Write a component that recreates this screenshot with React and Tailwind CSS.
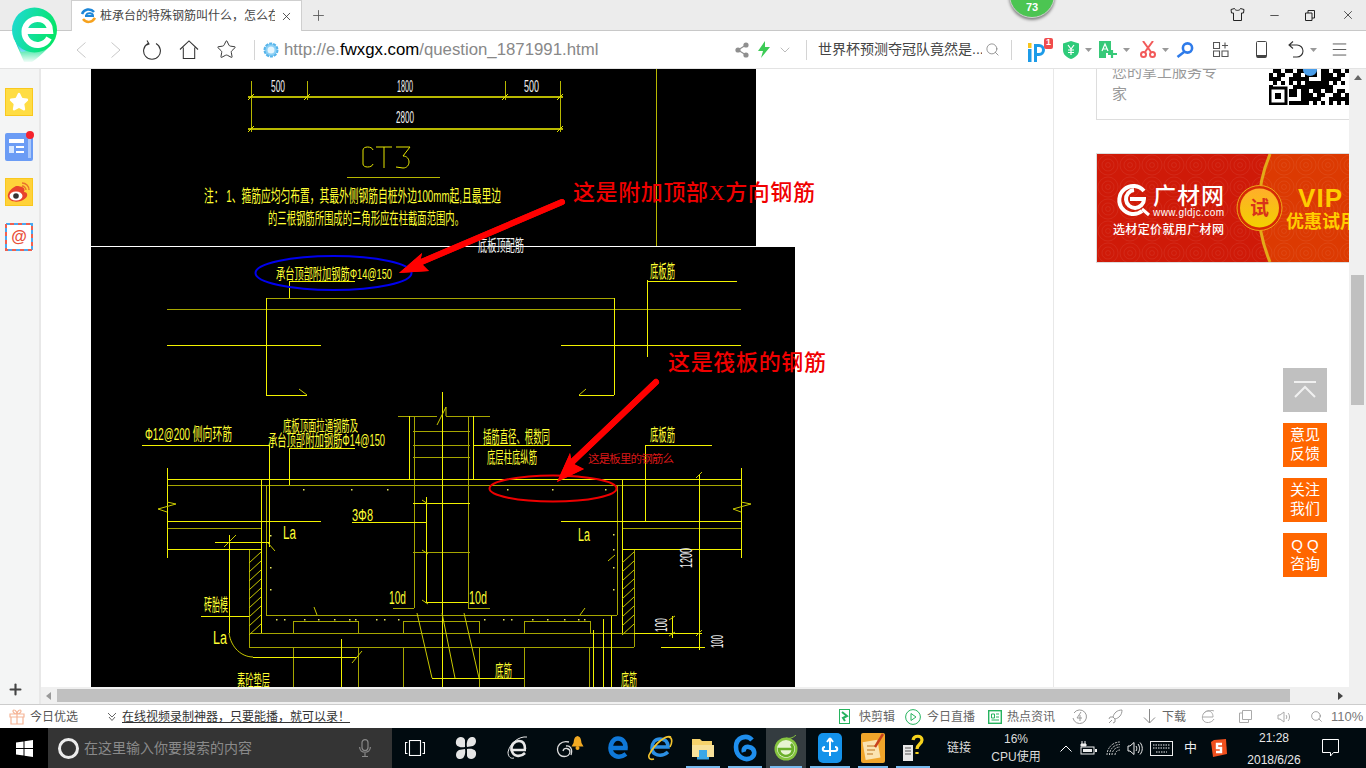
import React from "react";
import { Star, ChevronDown, Search, Plus, X, Minus, Menu } from "lucide-react";

// CAD drawing lines, page coordinates [x1, y1, x2, y2]
const topLines = [
  [251, 81, 251, 132], [307, 81, 307, 100], [505, 81, 505, 100],
  [560, 81, 560, 132], [347, 177, 440, 177], [656, 69, 656, 246],
];

const brightLines = [
  [289, 281, 355, 281], [289, 281, 289, 298], [647, 281, 737, 281], [647, 280, 647, 357],
  [167, 345, 321, 345], [561, 345, 741, 345], [266, 298, 266, 395], [614, 298, 614, 395],
  [266, 395, 307, 395], [579, 395, 614, 395], [167, 479, 741, 479], [167, 468, 167, 558], [741, 468, 741, 558],
  [167, 521, 321, 521], [561, 521, 741, 521], [167, 549, 262, 549], [622, 549, 741, 549],
  [261, 479, 261, 633], [622, 479, 622, 633], [269, 445, 269, 547], [142, 445, 269, 445],
  [289, 448, 355, 448], [289, 448, 289, 485], [409, 416, 409, 479], [473, 416, 473, 479],
  [442, 392, 442, 687], [413, 503, 470, 503], [425, 602, 468, 602], [426, 497, 426, 603],
  [352, 522, 426, 522], [215, 542, 269, 542], [201, 616, 249, 616], [229, 535, 229, 633],
  [253, 657, 357, 657], [432, 678, 524, 678], [473, 445, 571, 445], [645, 445, 712, 445],
  [645, 445, 645, 521], [699, 475, 699, 650], [634, 633, 702, 633], [661, 647, 705, 647], [672, 616, 672, 638],
  [593, 630, 593, 687], [603, 619, 603, 687], [611, 616, 611, 687], [341, 639, 341, 687],
];

const dullLines = [
  [266, 298, 614, 298], [167, 309, 741, 309], [167, 485, 741, 485], [167, 528, 262, 528], [622, 528, 741, 528],
  [266, 485, 266, 615], [266, 615, 617, 615], [617, 485, 617, 615], [249, 550, 249, 647], [249, 633, 634, 633],
  [249, 647, 634, 647], [634, 550, 634, 647], [414, 416, 414, 608], [468, 416, 468, 608],
  [398, 416, 437, 416], [446, 416, 490, 416], [413, 431, 470, 431], [413, 445, 470, 445], [413, 457, 470, 457],
  [413, 552, 470, 552], [393, 608, 414, 608], [468, 608, 490, 608],
  [293, 621, 358, 621], [293, 621, 293, 633], [358, 621, 358, 633], [403, 621, 479, 621], [403, 621, 403, 633],
  [479, 621, 479, 633], [524, 621, 590, 621], [524, 621, 524, 633], [590, 621, 590, 633],
  [293, 647, 293, 687], [358, 647, 358, 687], [403, 647, 403, 687], [479, 647, 479, 687], [524, 647, 524, 687], [589, 647, 589, 687],
];

const thinStrokes = [
  "M299 389 L307 395", "M586 389 L579 395", "M167 502 L176 504 L158 509 L167 512", "M741 502 L751 504 L733 509 L741 512",
  "M437 425 L446 407 L446 416", "M268 543 L275 551", "M224 547 L236 535", "M229 633 C231 648 242 657 253 657", "M352 663 L362 651",
  "M417 613 L432 678", "M442 613 L455 678", "M464 613 L479 678", "M314 607 L317 615", "M580 615 L585 608", "M608 561 L615 555",
  "M696 478 L702 472", "M696 636 L702 630", "M669 620 L675 616", "M669 636 L675 632", "M422 500 L428 504", "M422 550 L428 554", "M422 600 L428 604",
];

const dots = [
  [303, 489], [351, 489], [387, 489], [507, 489], [552, 489], [605, 489], [270, 535], [270, 567], [270, 589], [613, 534], [613, 549], [613, 567], [613, 589],
  [276, 619], [284, 619], [304, 619], [318, 619], [334, 619], [349, 619], [355, 619], [376, 619], [384, 619], [398, 619], [484, 619], [503, 619], [511, 619],
  [532, 619], [547, 619], [564, 619], [578, 619], [584, 619],
];

// simple blocks for the cropped QR code
const qrCells = [];
for (let r = 0; r < 9; r++) {
  for (let c = 0; c < 20; c++) {
    if ((r * 7 + c * 13 + (r * c) % 5) % 3 !== 0 && !(r > 4 && c < 5)) qrCells.push([c * 4, r * 4]);
  }
}

function CadText({ x, y, w, size = 14, white, children }) {
  return (
    <text x={x} y={y} fontSize={size} textLength={w} lengthAdjust="spacingAndGlyphs" className={white ? "fill-[#f0f0f0]" : "fill-[#ffff33]"}>
      {children}
    </text>
  );
}

function Arrows() {
  return (
    <g>
      <path d="M562 202 L412 266" stroke="#ff0000" strokeWidth="6" strokeLinecap="round" fill="none" />
      <path d="M399 273 L422 253 L420 262 L429 271 Z" fill="#ff0000" />
      <path d="M656 382 L568 466" stroke="#ff0000" strokeWidth="6" strokeLinecap="round" fill="none" />
      <path d="M557 482 L570 453 L572 463 L584 469 Z" fill="#ff0000" />
    </g>
  );
}

function RedLabel({ x, y, w, children }) {
  return (
    <text x={x} y={y} fontSize="22" fontWeight="500" textLength={w} className="fill-[#f00000] font-['Liberation_Serif','Noto_Sans_CJK_SC',serif]">
      {children}
    </text>
  );
}

function CadTop() {
  return (
    <svg viewBox="91 69 665 177" width="665" height="177" className="block overflow-visible bg-black">
      <g stroke="#b8b800" strokeWidth="2" shapeRendering="crispEdges">
        <line x1="248" y1="97" x2="563" y2="97" />
        <line x1="248" y1="129" x2="563" y2="129" />
      </g>
      <g stroke="#b8b800" strokeWidth="1" shapeRendering="crispEdges">
        {topLines.map((l, i) => <line key={i} x1={l[0]} y1={l[1]} x2={l[2]} y2={l[3]} />)}
      </g>
      <g stroke="#e6e600" strokeWidth="1" fill="none">
        <path d="M248 100 L254 94 M304 100 L310 94 M502 100 L508 94 M557 100 L563 94 M248 132 L254 126 M557 132 L563 126" />
        <path d="M363 150 C363 146 372 146 373 150 M363 150 L363 164 C363 168 372 168 373 164 M376 147 L392 147 M384 147 L384 168 M396 147 L410 147 L403 156 C411 156 411 168 403 168 L396 167" />
      </g>
      <CadText x={271} y={92} w={14} size={16} white>500</CadText>
      <CadText x={397} y={92} w={16} size={16} white>1800</CadText>
      <CadText x={524} y={92} w={15} size={16} white>500</CadText>
      <CadText x={396} y={123} w={18} size={16} white>2800</CadText>
      <CadText x={204} y={202} w={297} size={17}>注： 1、箍筋应均匀布置，其最外侧钢筋自桩外边100mm起,且最里边</CadText>
      <CadText x={268} y={224} w={196} size={16}>的三根钢筋所围成的三角形应在柱截面范围内。</CadText>
      <CadText x={478} y={251} w={46} size={16} white>底板顶配筋</CadText>
      <RedLabel x={573} y={200} w={242}>这是附加顶部X方向钢筋</RedLabel>
      <Arrows />
    </svg>
  );
}

function CadBottom() {
  const hatch = [];
  for (let y = 552; y < 630; y += 9) {
    hatch.push([249, y + 11, 261, y]);
    hatch.push([622, y + 11, 634, y]);
  }
  return (
    <svg viewBox="91 247 704 440" width="704" height="440" className="mt-[1px] block overflow-visible bg-black">
      <g stroke="#a6a600" strokeWidth="1" shapeRendering="crispEdges">
        {dullLines.map((l, i) => <line key={i} x1={l[0]} y1={l[1]} x2={l[2]} y2={l[3]} />)}
      </g>
      <g stroke="#f2f200" strokeWidth="1" shapeRendering="crispEdges">
        {brightLines.map((l, i) => <line key={i} x1={l[0]} y1={l[1]} x2={l[2]} y2={l[3]} />)}
      </g>
      <g stroke="#c8c800" strokeWidth="1" fill="none">
        {thinStrokes.map((d, i) => <path key={i} d={d} />)}
        {hatch.map((l, i) => <line key={i} x1={l[0]} y1={l[1]} x2={l[2]} y2={l[3]} />)}
      </g>
      <g className="fill-[#e8e860]">
        {dots.map((p, i) => <rect key={i} x={p[0]} y={p[1]} width="1.5" height="1.5" />)}
      </g>

      <CadText x={276} y={279} w={116} size={15}>承台顶部附加钢筋Φ14@150</CadText>
      <CadText x={650} y={278} w={25} size={18}>底板筋</CadText>
      <CadText x={145} y={440} w={87} size={17}>Φ12@200 侧向环筋</CadText>
      <CadText x={283} y={431} w={75} size={15}>底板顶面拉通钢筋及</CadText>
      <CadText x={268} y={446} w={117} size={16}>承台顶部附加钢筋Φ14@150</CadText>
      <CadText x={483} y={443} w={67} size={17}>插筋直径、根数同</CadText>
      <CadText x={487} y={463} w={50} size={16}>底层柱底纵筋</CadText>
      <CadText x={650} y={441} w={25} size={17}>底板筋</CadText>
      <CadText x={352} y={521} w={21} size={17}>3Φ8</CadText>
      <CadText x={283} y={539} w={13} size={18}>La</CadText>
      <CadText x={578} y={541} w={12} size={18}>La</CadText>
      <CadText x={213} y={644} w={14} size={18}>La</CadText>
      <CadText x={389} y={604} w={17} size={18}>10d</CadText>
      <CadText x={469} y={604} w={18} size={18}>10d</CadText>
      <CadText x={204} y={611} w={24} size={17}>砖胎模</CadText>
      <CadText x={237} y={686} w={33} size={16}>素砼垫层</CadText>
      <CadText x={495} y={677} w={17} size={17}>底筋</CadText>
      <CadText x={621} y={686} w={16} size={17}>底筋</CadText>
      <g transform="translate(692 568) rotate(-90)"><CadText x={0} y={0} w={20} size={17} white>1200</CadText></g>
      <g transform="translate(667 632) rotate(-90)"><CadText x={0} y={0} w={14} size={16} white>100</CadText></g>
      <g transform="translate(723 648) rotate(-90)"><CadText x={0} y={0} w={13} size={16} white>100</CadText></g>

      <ellipse cx="333.5" cy="273" rx="78" ry="17" fill="none" stroke="#0000ee" strokeWidth="2" />
      <ellipse cx="553" cy="488.5" rx="63.5" ry="13" fill="none" stroke="#ee0000" strokeWidth="2" />
      <text x="588" y="463" fontSize="11.5" textLength="86" className="fill-[#d81818]">这是板里的钢筋么</text>
      <RedLabel x={668} y={370} w={158}>这是筏板的钢筋</RedLabel>
      <Arrows />
    </svg>
  );
}

function Logo() {
  return (
    <svg width="46" height="56" viewBox="0 0 46 56" className="absolute left-[12px] top-[7px] z-20">
      <defs>
        <linearGradient id="logoFill" x1="0" y1="0" x2="1" y2="0.3">
          <stop offset="0" stopColor="#21d9d9" />
          <stop offset="1" stopColor="#05e56a" />
        </linearGradient>
        <linearGradient id="logoFade" x1="0" y1="0" x2="0" y2="1">
          <stop offset="0" stopColor="#ffffff" stopOpacity="0" />
          <stop offset="1" stopColor="#ffffff" />
        </linearGradient>
      </defs>
      <path d="M2 30 C5 40 9 47 12 55 H20 C30 48 40 38 44 28 Z" fill="#0de08c" />
      <path d="M2 30 C4 37 7 41 9 45 L22 43 L14 30 Z" fill="#35c6f5" />
      <rect x="0" y="38" width="46" height="18" fill="url(#logoFade)" />
      <circle cx="22.5" cy="23" r="22.5" fill="url(#logoFill)" />
      <path d="M37 31 A13 13 0 1 1 37.5 20 L38 24 L13 24" fill="none" stroke="#fff" strokeWidth="6" />
    </svg>
  );
}

function TitleBar() {
  return (
    <div className="flex h-[31px] items-start border-b border-[#c8c8c8] bg-[#ececec] pl-[71px]">
      <div className="relative z-10 flex h-[31px] w-[231px] items-center border-x border-t border-[#cfcfcf] bg-white pl-[8px]">
        <svg width="16" height="16" viewBox="0 0 16 16">
          <path d="M2 6 A7 7 0 0 1 14 4" fill="none" stroke="#1c86d8" strokeWidth="2.5" />
          <path d="M3 11 C6 15 12 15 15 10" fill="none" stroke="#f6a21e" strokeWidth="2.5" />
          <path d="M5 8 H13 C13 5 8 4 6 7" fill="none" stroke="#1c86d8" strokeWidth="2" />
        </svg>
        <span className="ml-[4px] w-[175px] overflow-hidden whitespace-nowrap text-[12px] text-[#444]">桩承台的特殊钢筋叫什么，怎么在</span>
        <X size={13} strokeWidth={1.5} className="ml-[5px] text-[#333]" />
      </div>
      <Plus size={17} strokeWidth={1.2} className="ml-[8px] mt-[7px] text-[#555]" />
      <div className="ml-auto flex h-[30px] items-center text-[#222]">
        <svg width="15" height="13" viewBox="0 0 15 13" fill="none" stroke="#222" className="mb-[1px]">
          <path d="M4.5 .5 L1 1.5 L1.5 5 L3.5 5 V12.5 H11.5 V5 H13.5 L14 1.5 L10.5 .5 C10 3 5 3 4.5 .5 Z" />
        </svg>
        <Minus size={13} strokeWidth={1.4} className="ml-[23px]" />
        <svg width="10" height="11" viewBox="0 0 10 11" fill="none" stroke="#222" className="ml-[24px]">
          <path d="M.5 3 H7 V10.5 H.5 Z M3 3 V.5 H9.5 V8 H7" />
        </svg>
        <X size={14} strokeWidth={1.3} className="ml-[26px] mr-[11px]" />
      </div>
    </div>
  );
}

function Caret({ className }) {
  return (
    <svg width="7" height="4" viewBox="0 0 7 4" className={className}>
      <path d="M0 0 H7 L3.5 4 Z" fill="#999" />
    </svg>
  );
}

function Toolbar() {
  return (
    <div className="flex h-[38px] items-center border-b border-[#e3e3e3] bg-white pl-[76px]">
      <svg width="10" height="16" viewBox="0 0 10 16" fill="none" stroke="#c8c8c8"><path d="M9.5 .5 L1 8 L9.5 15.5" /></svg>
      <svg width="10" height="16" viewBox="0 0 10 16" fill="none" stroke="#c8c8c8" className="ml-[25px]"><path d="M.5 .5 L9 8 L.5 15.5" /></svg>
      <svg width="18" height="20" viewBox="0 0 18 20" fill="none" stroke="#333" strokeWidth="1.1" className="ml-[22px]">
        <path d="M5 3.5 A8.4 8.4 0 1 0 13 3.5 M4 .5 L6 4 L2.5 5.5" />
      </svg>
      <svg width="20" height="19" viewBox="0 0 21 20" fill="none" stroke="#333" strokeWidth="1.1" className="ml-[18px]">
        <path d="M1 10 L10.5 1 L20 10 M4.5 8 V19.5 H16.5 V8" />
      </svg>
      <Star size={21} strokeWidth={1.1} className="ml-[17px] text-[#333]" />
      <div className="ml-[17px] h-[20px] w-px bg-[#d4d4d4]" />
      <svg width="16" height="16" viewBox="0 0 16 16" className="ml-[8px]">
        <circle cx="8" cy="8" r="6.5" fill="#8cd0f5" stroke="#57b4ea" strokeWidth="2" strokeDasharray="3 1" />
        <circle cx="8" cy="8" r="3.5" fill="#e6f6fe" />
      </svg>
      <div className="ml-[5px] w-[451px] text-[16.8px] text-[#888]">
        http://e.<span className="text-black">fwxgx.com</span>/question_1871991.html
      </div>
      <svg width="14" height="16" viewBox="0 0 14 16" fill="#8f8f8f">
        <circle cx="11" cy="3" r="2.6" /><circle cx="3" cy="8" r="2.6" /><circle cx="11" cy="13" r="2.6" />
        <path d="M3 8 L11 3 M3 8 L11 13" stroke="#8f8f8f" strokeWidth="1.2" />
      </svg>
      <svg width="12" height="17" viewBox="0 0 12 17" fill="#3ccb55" className="ml-[9px]">
        <path d="M7 0 L0 10 H5 L3 17 L12 6 H7 Z" />
      </svg>
      <ChevronDown size={16} strokeWidth={1} className="ml-[7px] text-[#999]" />
      <div className="ml-[13px] h-[20px] w-px bg-[#d4d4d4]" />
      <span className="ml-[11px] w-[164px] overflow-hidden whitespace-nowrap text-[14px] text-[#444]">世界杯预测夺冠队竟然是...</span>
      <Search size={15} strokeWidth={1.2} className="ml-[3px] text-[#777]" />
      <div className="ml-[11px] h-[20px] w-px bg-[#d4d4d4]" />
      <div className="relative ml-[16px] h-[24px] w-[25px]">
        <svg width="25" height="24" viewBox="0 0 25 24">
          <rect x="0" y="5" width="3.5" height="5" fill="#f7c51e" />
          <rect x="0" y="11" width="3.5" height="13" fill="#1c9be8" />
          <path d="M6 6 H11 A6 6 0 0 1 11 18 H9 V24 H6 Z M9 9 V15 H11 A3 3 0 0 0 11 9 Z" fill="#1c9be8" />
        </svg>
        <span className="absolute right-0 top-0 flex h-[11px] w-[9px] items-center justify-center rounded-[2px] bg-[#f04c4c] text-[9px] font-bold text-white">1</span>
      </div>
      <svg width="16" height="18" viewBox="0 0 16 18" className="ml-[10px]">
        <path d="M8 0 L16 2.5 V9 C16 14 12 16.5 8 18 C4 16.5 0 14 0 9 V2.5 Z" fill="#2ecb7a" />
        <path d="M5 4 L8 8 L11 4 M8 8 V14 M5 9 H11 M5 11.5 H11" stroke="#fff" strokeWidth="1.2" fill="none" />
      </svg>
      <Caret className="ml-[6px]" />
      <svg width="19" height="18" viewBox="0 0 19 18" className="ml-[7px]">
        <path d="M0 0 H12 V12 H7 V17 H0 Z" fill="#37c978" />
        <path d="M3 10 L6 3 L9 10 M4 8 H8" stroke="#fff" strokeWidth="1.2" fill="none" />
        <path d="M13 9 V17 M9 13 H18" stroke="#37c978" strokeWidth="2.2" />
      </svg>
      <Caret className="ml-[5px]" />
      <svg width="16" height="17" viewBox="0 0 16 17" fill="none" stroke="#f25a5a" strokeWidth="2" className="ml-[10px]">
        <path d="M3 0 L11 11 M13 0 L5 11" />
        <circle cx="3.5" cy="13.5" r="2.5" /><circle cx="12.5" cy="13.5" r="2.5" />
      </svg>
      <Caret className="ml-[6px]" />
      <svg width="18" height="16" viewBox="0 0 18 16" fill="none" stroke="#2e7bea" strokeWidth="2.6" className="ml-[7px]">
        <circle cx="11.5" cy="6" r="4.6" />
        <path d="M8 10 L1.5 15" />
      </svg>
      <svg width="16" height="15" viewBox="0 0 16 15" fill="none" stroke="#555" strokeWidth="1.1" className="ml-[19px]">
        <path d="M.5 .5 H6.5 V6.5 H.5 Z M.5 9 H6.5 V14.5 H.5 Z M9 9 H15 V14.5 H9 Z M12 .5 V6.5 M9 3.5 H15" />
      </svg>
      <svg width="11" height="17" viewBox="0 0 11 17" className="ml-[27px]">
        <rect x=".5" y=".5" width="10" height="16" rx="1" fill="none" stroke="#444" />
        <rect x="1" y="14" width="9" height="2.5" fill="#444" />
      </svg>
      <svg width="16" height="17" viewBox="0 0 16 17" fill="none" stroke="#333" strokeWidth="1.1" className="ml-[21px]">
        <path d="M5 .5 L1 4 L5 7.5 M1 4 H9 A6 6 0 0 1 9 16 H5" />
      </svg>
      <Caret className="ml-[6px]" />
      <Menu size={19} strokeWidth={1} className="ml-[13px] text-[#333]" />
    </div>
  );
}

function SideIcons() {
  return (
    <div className="flex w-[41px] shrink-0 flex-col border-r-[2px] border-[#e8e8e8] bg-[#f4f5f5] pl-[5px] pt-[19px]">
      <div className="flex h-[28px] w-[28px] items-center justify-center border border-[#f9c81e] bg-[#ffdd44]">
        <Star size={20} fill="#fff" stroke="#fff" />
      </div>
      <div className="relative mt-[17px] h-[28px] w-[28px] rounded-[2px] bg-[#6b9cf5]">
        <svg width="28" height="28" viewBox="0 0 28 28">
          <rect x="4" y="6" width="15" height="4" fill="#fff" />
          <rect x="4" y="13" width="5" height="7" fill="#d5e6ff" />
          <rect x="11" y="13" width="8" height="2" fill="#fff" />
          <rect x="11" y="18" width="8" height="2" fill="#fff" />
          <rect x="23" y="6" width="3" height="19" fill="#a9c7fa" />
        </svg>
        <span className="absolute right-[-1px] top-[-2px] h-[8px] w-[8px] rounded-full bg-[#f5222d]" />
      </div>
      <div className="mt-[17px] h-[28px] w-[28px] border border-[#f9c81e] bg-[#ffd23a]">
        <svg width="26" height="26" viewBox="0 0 26 26">
          <path d="M10 7 C4 10 1 15 2 18 C3 23 12 24 17 21 C23 18 22 13 18 13 C20 9 16 7 10 7 Z" fill="#e8432d" />
          <ellipse cx="10" cy="17" rx="6.5" ry="4.5" fill="#fff" />
          <circle cx="10" cy="17" r="2.8" fill="#333" />
          <path d="M16 4 C20 4 23 7 23 11 M16 7 C18 7 20 9 20 11" stroke="#e8732d" strokeWidth="1.4" fill="none" />
        </svg>
      </div>
      <div className="relative mt-[17px] flex h-[28px] w-[28px] items-center justify-center bg-white text-[16px] font-bold text-[#e8503a]">
        <svg width="28" height="28" viewBox="0 0 28 28" fill="none" strokeWidth="2" className="absolute left-0 top-0">
          <rect x="1" y="1" width="26" height="26" stroke="#4aa8f0" strokeDasharray="4 4" />
          <rect x="1" y="1" width="26" height="26" stroke="#f0604f" strokeDasharray="4 4" strokeDashoffset="4" />
        </svg>
        <span>@</span>
      </div>
      <div className="mt-auto flex h-[25px] items-center pb-[4px]">
        <Plus size={17} strokeWidth={3} className="ml-[2px] text-[#444]" />
      </div>
    </div>
  );
}

function QrCrop() {
  return (
    <svg width="80" height="36" viewBox="0 0 80 36">
      {qrCells.map((c, i) => <rect key={i} x={c[0]} y={c[1]} width="4" height="4" fill="#000" />)}
      <rect x="1" y="19" width="16" height="16" fill="#fff" stroke="#000" strokeWidth="3" />
      <rect x="6" y="24" width="6" height="6" fill="#000" />
      <ellipse cx="41" cy="1" rx="7" ry="6" fill="#4a9eea" />
    </svg>
  );
}

function Banner() {
  return (
    <div className="mt-[33px] h-[110px] w-[253px] border border-r-0 border-[#dddddd]">
      <svg width="252" height="108" viewBox="1097 154 252 108" className="block">
        <defs>
          <pattern id="swirl" x="1097" y="154" width="22" height="22" patternUnits="userSpaceOnUse">
            <circle cx="11" cy="11" r="10" fill="none" stroke="#ffffff" strokeOpacity="0.06" />
            <circle cx="11" cy="11" r="6" fill="none" stroke="#ffffff" strokeOpacity="0.06" />
            <circle cx="11" cy="11" r="2.5" fill="none" stroke="#ffffff" strokeOpacity="0.06" />
          </pattern>
          <linearGradient id="coin" x1="0" y1="0" x2="0" y2="1">
            <stop offset="0" stopColor="#ffae2a" />
            <stop offset="1" stopColor="#f2d000" />
          </linearGradient>
        </defs>
        <rect x="1097" y="154" width="252" height="108" fill="#cf1a08" />
        <path d="M1270 154 C1255 190 1255 226 1270 262 H1349 V154 Z" fill="#dc3a02" />
        <rect x="1097" y="154" width="252" height="108" fill="url(#swirl)" />
        <path d="M1270 154 C1255 190 1255 226 1270 262" fill="none" stroke="#e3aa18" strokeWidth="3" />
        <circle cx="1259.5" cy="208" r="22.5" fill="#d62a06" stroke="#f0a818" />
        <circle cx="1259.5" cy="208" r="19.5" fill="url(#coin)" />
        <text x="1250" y="215" fontSize="19" fontWeight="700" textLength="19" className="fill-[#d8321a]">试</text>
        <path d="M1144 191 A14 14 0 1 0 1142 211 M1130 199 H1144 A9 9 0 1 1 1134 190" fill="none" stroke="#fff" strokeWidth="4" />
        <path d="M1142 209 L1149 215" stroke="#fff" strokeWidth="3" />
        <text x="1153" y="204" fontSize="23" fontWeight="500" textLength="71" className="fill-white">广材网</text>
        <text x="1153" y="216" fontSize="10" textLength="71" className="fill-white">www.gldjc.com</text>
        <text x="1113" y="234" fontSize="12" fontWeight="500" textLength="111" className="fill-white">选材定价就用广材网</text>
        <text x="1298" y="207" fontSize="26" fontWeight="700" textLength="44" className="fill-[#ffcc00]">VIP</text>
        <text x="1286" y="228" fontSize="18" fontWeight="700" className="fill-[#ffcc00]">优惠试用</text>
      </svg>
    </div>
  );
}

function SideButton({ top, bottom }) {
  return (
    <div className="flex h-[44px] w-[44px] flex-col items-center justify-center bg-[#ff6600] pb-[3px] text-[15px] leading-[19px] text-white">
      <span>{top}</span>
      <span>{bottom}</span>
    </div>
  );
}

function Content() {
  return (
    <div className="relative flex h-[618px] overflow-hidden bg-white">
      <div className="w-[1013px] shrink-0 border-r border-[#e8e8e8] pl-[50px]">
        <CadTop />
        <CadBottom />
      </div>
      <div className="w-[295px] shrink-0 pl-[42px]">
        <div className="flex h-[51px] w-[253px] justify-between overflow-hidden border-b border-l border-[#dddddd]">
          <div className="mt-[-8px] w-[120px] pl-[15px] text-[15px] leading-[22px] text-[#999]">您的掌上服务专家</div>
          <QrCrop />
        </div>
        <Banner />
      </div>
      <div className="flex w-[17px] shrink-0 flex-col items-center bg-[#f0f0f0] pt-[6px]">
        <svg width="8" height="5" viewBox="0 0 8 5"><path d="M4 0 L8 5 H0 Z" fill="#666" /></svg>
        <div className="mt-[195px] h-[130px] w-[13px] bg-[#c0c0c0]" />
      </div>
      {/* floating back-to-top and contact buttons */}
      <div className="absolute left-[1242px] top-[299px] flex flex-col gap-[11px]">
        <div className="flex h-[44px] w-[44px] items-center justify-center bg-[#c0c0c0]">
          <svg width="24" height="20" viewBox="0 0 24 20" fill="none" stroke="#f0f0f0" strokeWidth="2">
            <path d="M1 2 H23 M2 17 L12 7 L22 17" />
          </svg>
        </div>
        <SideButton top="意见" bottom="反馈" />
        <SideButton top="关注" bottom="我们" />
        <SideButton top="Q Q" bottom="咨询" />
      </div>
    </div>
  );
}

function HScroll() {
  return (
    <div className="flex h-[17px] items-center bg-[#f0f0f0]">
      <svg width="5" height="8" viewBox="0 0 5 8" className="ml-[5px]"><path d="M5 0 V8 L0 4 Z" fill="#999" /></svg>
      <div className="ml-[6px] h-[13px] w-[1233px] bg-[#c0c0c0]" />
      <svg width="5" height="8" viewBox="0 0 5 8" className="ml-[48px]"><path d="M0 0 V8 L5 4 Z" fill="#444" /></svg>
    </div>
  );
}

function StatusBar() {
  return (
    <div className="flex h-[24px] items-center border-t border-[#cccccc] bg-white pl-[9px] text-[12px] text-[#666]">
      <svg width="16" height="16" viewBox="0 0 16 16" fill="none" stroke="#f5b597" strokeWidth="1.2">
        <path d="M1 5 H15 V8 H1 Z M2 8 V15 H14 V8 M8 5 V15 M8 5 C4 5 3 1 5 1 C7 1 8 4 8 5 C8 4 9 1 11 1 C13 1 12 5 8 5" />
      </svg>
      <span className="ml-[5px] w-[48px] whitespace-nowrap text-[#555]">今日优选</span>
      <svg width="10" height="10" viewBox="0 0 10 10" fill="none" stroke="#666" className="ml-[29px]">
        <path d="M1 1 L5 5 L9 1 M2 5 L5 8.5 L8 5" />
      </svg>
      <a className="ml-[5px] w-[228px] whitespace-nowrap text-[#333] underline">在线视频录制神器，只要能播，就可以录！</a>
      <svg width="11" height="15" viewBox="0 0 11 15" className="ml-[489px]" fill="none">
        <rect x=".5" y=".5" width="10" height="14" stroke="#27b35f" />
        <path d="M3 3 L8 7 L4 9 L6 12" stroke="#27b35f" strokeWidth="2" />
      </svg>
      <span className="ml-[9px] w-[37px] whitespace-nowrap">快剪辑</span>
      <svg width="16" height="16" viewBox="0 0 16 16" fill="none" stroke="#27b35f" className="ml-[9px]">
        <circle cx="8" cy="8" r="7.4" /><path d="M6 4.5 L11 8 L6 11.5 Z" />
      </svg>
      <span className="ml-[6px] w-[48px] whitespace-nowrap">今日直播</span>
      <svg width="14" height="14" viewBox="0 0 14 14" fill="none" stroke="#27b35f" className="ml-[13px]">
        <rect x=".7" y=".7" width="12.6" height="12.6" strokeWidth="1.4" /><path d="M3.5 4 V8 H6.5 V4 Z M8 4 H11 M8 7 H11 M3.5 10 H11" />
      </svg>
      <span className="ml-[5px] w-[48px] whitespace-nowrap">热点资讯</span>
      <svg width="15" height="15" viewBox="0 0 15 15" fill="none" stroke="#999" className="ml-[17px]">
        <path d="M2 4 A6.8 6.8 0 1 1 1 9 M9 3 L5 9 H10 M8 6 V12" />
      </svg>
      <svg width="15" height="15" viewBox="0 0 15 15" fill="none" stroke="#999" className="ml-[21px]">
        <path d="M14 1 C9 1 6 4 5 8 L7 10 C11 9 14 6 14 1 Z M5 8 L2 8 L1 10 M7 10 L7 13 L5 14 M4 11 L1 14" />
      </svg>
      <svg width="13" height="15" viewBox="0 0 13 15" fill="none" stroke="#888" className="ml-[20px]">
        <path d="M6.5 0 V14 M1 8.5 L6.5 14 L12 8.5" />
      </svg>
      <span className="ml-[6px] w-[24px] whitespace-nowrap">下载</span>
      <svg width="14" height="14" viewBox="0 0 14 14" fill="none" stroke="#aaa" className="ml-[15px]">
        <path d="M13 9 C11 13 4 14 2 10 C0 6 3 1 7 1 C10 1 12 3 12 7 H2 M3 3 C6 0 11 0 13 1" />
      </svg>
      <svg width="13" height="13" viewBox="0 0 13 13" fill="none" stroke="#aaa" className="ml-[24px]">
        <path d="M3.5 .5 H12.5 V9.5 H3.5 Z M3.5 3 H.5 V12.5 H9.5 V9.5" />
      </svg>
      <svg width="14" height="14" viewBox="0 0 14 14" fill="none" stroke="#aaa" className="ml-[25px]">
        <path d="M1 5 H3 L7 2 V12 L3 9 H1 Z M9 5 C10 6 10 8 9 9 M11 3 C13 5 13 9 11 11" />
      </svg>
      <Search size={13} strokeWidth={1.2} className="ml-[19px] text-[#777]" />
      <span className="ml-[8px] text-[13px] text-[#777]">110%</span>
    </div>
  );
}

function TaskSlot({ className, active, strip, children }) {
  return (
    <div className={`relative flex h-[40px] items-center justify-center ${active ? "bg-[#343c40]" : ""} ${className}`}>
      {children}
      {strip && <span className="absolute bottom-0 left-[4px] right-[4px] h-[2px] bg-[#76b9ed]" />}
    </div>
  );
}

function Taskbar() {
  return (
    <div className="flex h-[40px] items-center bg-[#010b10] text-white">
      <div className="flex h-[40px] w-[48px] items-center justify-center bg-black">
        <svg width="17" height="17" viewBox="0 0 17 17" fill="#fff">
          <path d="M0 2.5 L7.5 1.4 V8 H0 Z M8.5 1.2 L17 0 V8 H8.5 Z M0 9 H7.5 V15.6 L0 14.5 Z M8.5 9 H17 V17 L8.5 15.8 Z" />
        </svg>
      </div>
      <div className="flex h-[40px] w-[344px] items-center bg-[#343434] pl-[10px]">
        <span className="h-[21px] w-[21px] rounded-full border-[3px] border-[#ececec]" />
        <span className="ml-[5px] w-[168px] whitespace-nowrap text-[14px] text-[#8a8a8a]">在这里输入你要搜索的内容</span>
        <svg width="12" height="18" viewBox="0 0 12 18" fill="none" stroke="#888" strokeWidth="1.2" className="ml-[107px]">
          <rect x="3" y=".6" width="6" height="11" rx="3" /><path d="M.6 8 C.6 15 11.4 15 11.4 8 M6 14 V18 M3 17.5 H9" />
        </svg>
      </div>
      <TaskSlot className="w-[46px]">
        <svg width="20" height="16" viewBox="0 0 20 16" fill="none" stroke="#fff" strokeWidth="1.1">
          <rect x="4.5" y=".5" width="11" height="15" /><path d="M2.5 2.5 H.5 V13.5 H2.5 M17.5 2.5 H19.5 V13.5 H17.5" />
        </svg>
      </TaskSlot>
      <TaskSlot className="w-[56px]">
        <svg width="22" height="24" viewBox="0 0 22 24" fill="#e5e5e5">
          <path d="M10 11 C4 12 0 10 1 5 C2 0 9 0 10 4 Z M12 11 C11 6 13 0 18 1 C22 2 22 8 18 10 Z M12 13 C18 12 22 14 21 19 C20 24 13 24 12 20 Z M10 13 C11 18 9 24 4 23 C0 22 0 16 4 14 Z" />
        </svg>
      </TaskSlot>
      <TaskSlot className="w-[48px]">
        <svg width="22" height="24" viewBox="0 0 22 24" fill="none" stroke="#e8e8e8" strokeWidth="2.6">
          <path d="M19 14 H4.5 C4 8 8 5 12 5 C16 5 18 8 18 13 M5 15 C6 20 13 22 18 17" />
          <path d="M20 1 C12 0 3 7 1 16 C1 21 4 23 7 22" strokeWidth="1" />
        </svg>
      </TaskSlot>
      <TaskSlot className="w-[56px]">
        <div className="relative h-[24px] w-[28px]">
          <svg width="18" height="20" viewBox="0 0 18 20" fill="none" stroke="#ddd" strokeWidth="1.3" className="absolute bottom-0 left-0">
            <path d="M13 2 C5 0 0 6 2 12 C4 18 13 18 14 12 C14 8 8 7 7 11 M10 6 C14 5 17 9 15 15" />
          </svg>
          <svg width="13" height="14" viewBox="0 0 13 14" fill="#f1a922" className="absolute right-0 top-0">
            <path d="M6.5 0 C3 1 3 4 2.5 7 L.5 10.5 H12.5 L10.5 7 C10 4 10 1 6.5 0 Z" /><circle cx="6.5" cy="12" r="2" />
          </svg>
        </div>
      </TaskSlot>
      <TaskSlot className="w-[40px]">
        <svg width="20" height="24" viewBox="0 0 20 24" fill="none" stroke="#0f78d8" strokeWidth="4.6">
          <path d="M2.5 12 H17.5 C18 6 14 2.5 10 2.5 C5 2.5 2.5 8 2.5 12 C2.5 19 10 24 18 18" />
        </svg>
      </TaskSlot>
      <TaskSlot className="w-[44px]">
        <svg width="26" height="26" viewBox="0 0 26 26" fill="none">
          <path d="M5 12 H21 C21 6 17 4 13 4 C8 4 5 8 5 13 C5 20 14 23 21 17" stroke="#2b8fe3" strokeWidth="3.6" />
          <path d="M24 2 C19 0 8 8 2 20 C1 24 4 25 7 24 M22 2 C26 3 25 8 23 12" stroke="#f3c42e" strokeWidth="1.6" />
        </svg>
      </TaskSlot>
      <TaskSlot className="w-[42px]" strip>
        <svg width="22" height="24" viewBox="0 0 22 24">
          <path d="M0 3 H8 L10 5 H20 V11 H0 Z" fill="#f5d26c" />
          <path d="M0 9 H22 V21 H0 Z" fill="#f7e19a" />
          <path d="M7 21 V14 H15 V21 Z" fill="#3aa7e6" />
          <path d="M5 23.5 H17 V21 H5 Z" fill="#3aa7e6" />
        </svg>
      </TaskSlot>
      <TaskSlot className="w-[42px]" strip>
        <svg width="24" height="28" viewBox="0 0 24 28" fill="none" stroke="#1f8fee" strokeWidth="4.6">
          <path d="M19 6 C14 0 3 3 3 13 C3 23 12 27 18 24 C23 21 22 14 16 13 C12 12 10 15 11 18" />
        </svg>
      </TaskSlot>
      <TaskSlot className="w-[40px]" active strip>
        <svg width="24" height="27" viewBox="0 0 24 27">
          <circle cx="12" cy="14" r="11.5" fill="#86c440" />
          <circle cx="12" cy="14" r="9" fill="#e6f4d2" />
          <path d="M19 14 H5 A7 7 0 1 0 17 9" fill="none" stroke="#6ab02a" strokeWidth="2.6" />
          <path d="M22 0 C19 3 15 4 12 3" stroke="#86c440" fill="none" />
        </svg>
      </TaskSlot>
      <TaskSlot className="w-[48px]" strip>
        <svg width="24" height="30" viewBox="0 0 24 30">
          <rect width="24" height="30" rx="5" fill="#1492ea" />
          <path d="M12 5 V23 M7 14 C4 14 4 18 7 18 H17 C20 18 20 14 17 14 M12 5 L9 9 M12 5 L15 9" stroke="#fff" strokeWidth="2" fill="none" />
        </svg>
      </TaskSlot>
      <TaskSlot className="w-[38px]" strip>
        <svg width="24" height="30" viewBox="0 0 24 30">
          <rect width="24" height="30" rx="2" fill="#f0a52a" />
          <rect x="3" y="8" width="15" height="18" fill="#fbe3b0" transform="rotate(-10 10 17)" />
          <path d="M6 13 H14 M6 17 H14 M6 21 H12" stroke="#b9701a" />
          <path d="M22 1 L14 14" stroke="#c8411c" strokeWidth="2.4" />
        </svg>
      </TaskSlot>
      <TaskSlot className="w-[42px]" strip>
        <svg width="22" height="28" viewBox="0 0 22 28">
          <rect x="1" y="11" width="10" height="16" fill="#e8e8e8" />
          <path d="M3 14 H9 M3 17 H9 M3 20 H9" stroke="#555" />
          <path d="M11 6 C12 1 20 1 20 6 C20 10 15 10 15 15 M15 18 V20" stroke="#f7d31c" strokeWidth="3.2" fill="none" />
        </svg>
      </TaskSlot>
      <span className="ml-[13px] w-[24px] whitespace-nowrap text-[12px] text-[#ddd]">链接</span>
      <div className="ml-[21px] flex w-[48px] flex-col items-center text-[12px] leading-[18px] text-[#ddd]">
        <span>16%</span>
        <span className="whitespace-nowrap">CPU使用</span>
      </div>
      <svg width="12" height="7" viewBox="0 0 12 7" fill="none" stroke="#fff" className="ml-[20px]"><path d="M.5 6.5 L6 1 L11.5 6.5" /></svg>
      <svg width="17" height="14" viewBox="0 0 17 14" className="ml-[8px]" fill="#eee">
        <rect x="1" y="6" width="13" height="7" fill="none" stroke="#eee" /><rect x="3" y="8" width="9" height="3" /><rect x="15" y="8" width="2" height="3" />
        <path d="M2 0 V3 M5 0 V3 M1 3 H6 V5 H1 Z" stroke="#eee" />
      </svg>
      <svg width="15" height="15" viewBox="0 0 15 15" fill="none" stroke="#ccc" className="ml-[9px]">
        <path d="M1 14 A13 13 0 0 1 14 1 M3.5 14 A10.5 10.5 0 0 1 14 3.5 M6 14 A8 8 0 0 1 14 6 M9 14 A5 5 0 0 1 14 9" strokeDasharray="2 1" />
      </svg>
      <svg width="16" height="15" viewBox="0 0 16 15" fill="none" stroke="#eee" className="ml-[6px]">
        <path d="M1 5 H3 L7 1.5 V13.5 L3 10 H1 Z M9 5 C10 6.5 10 8.5 9 10 M11 3 C13 5.5 13 9.5 11 12 M13 1.5 C16 5 16 10 13 13.5" />
      </svg>
      <svg width="23" height="15" viewBox="0 0 23 15" fill="none" stroke="#eee" className="ml-[7px]">
        <rect x=".5" y=".5" width="22" height="14" />
        <path d="M3 4 H20 M3 7 H20 M6 11 H17" strokeDasharray="1.5 1" />
      </svg>
      <span className="ml-[11px] text-[13px] text-[#eee]">中</span>
      <svg width="16" height="18" viewBox="0 0 16 18" className="ml-[14px]">
        <path d="M3 1 L15 0 L16 15 L2 18 L0 3 Z" fill="#f0501e" />
        <path d="M11 5 H6 V9 H10 V13 H5" stroke="#fff" strokeWidth="2.4" fill="none" />
      </svg>
      <div className="ml-[17px] flex w-[60px] flex-col items-center pt-[2px] text-[12px] leading-[22px] text-[#e8e8e8]">
        <span>21:28</span>
        <span className="whitespace-nowrap">2018/6/26</span>
      </div>
      <svg width="17" height="18" viewBox="0 0 17 18" fill="none" stroke="#fff" className="ml-[18px]">
        <path d="M.5 .5 H16.5 V13.5 H11.5 L8.5 17 V13.5 H.5 Z" />
      </svg>
    </div>
  );
}

export default function App() {
  return (
    <div className="relative h-[768px] w-[1366px] overflow-hidden bg-white font-['Liberation_Sans','Noto_Sans_CJK_SC',sans-serif]">
      <Logo />
      {/* update badge hanging from the top edge */}
      <div className="absolute left-[1009px] top-[-28px] z-20 flex h-[46px] w-[46px] items-end justify-center rounded-full border border-[#d0d0d0] bg-[#4cc552] pb-[3px] text-[11px] font-bold leading-[14px] text-white shadow-[0_2px_3px_rgba(0,0,0,0.45)]">
        73
      </div>
      <TitleBar />
      <Toolbar />
      <div className="flex h-[635px]">
        <SideIcons />
        <div className="w-[1325px]">
          <Content />
          <HScroll />
        </div>
      </div>
      <StatusBar />
      <Taskbar />
    </div>
  );
}
